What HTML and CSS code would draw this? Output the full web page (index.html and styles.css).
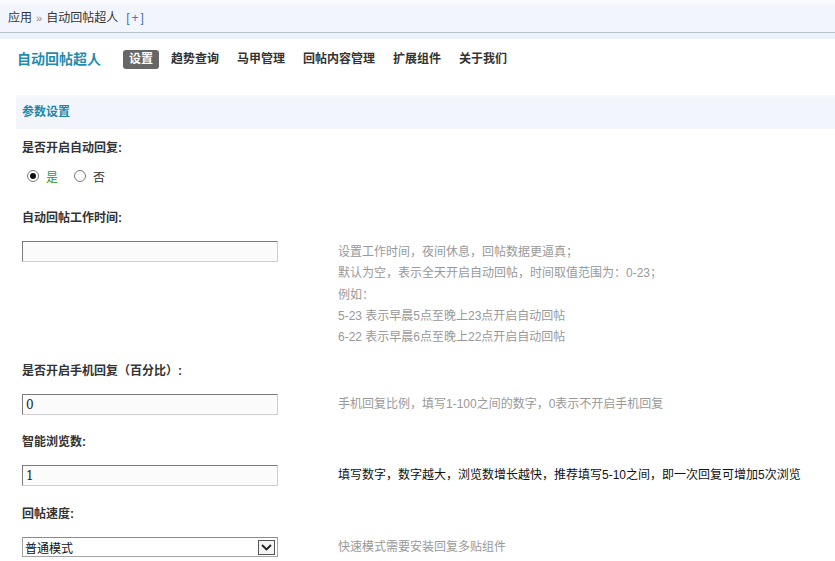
FILE: index.html
```html
<!DOCTYPE html>
<html lang="zh-CN">
<head>
<meta charset="utf-8">
<title>自动回帖超人</title>
<link rel="stylesheet" href="styles.css">
</head>
<body>
<div class="topbar">
  <span class="crumb">应用</span>
  <span class="sep">»</span>
  <span class="crumb">自动回帖超人</span>
  <a class="plus">[+]</a>
</div>
<div class="topstrip"></div>

<div class="main">
  <div class="titlerow">
    <h1 class="apptitle">自动回帖超人</h1>
    <nav class="nav">
      <a class="navitem active">设置</a>
      <a class="navitem">趋势查询</a>
      <a class="navitem">马甲管理</a>
      <a class="navitem">回帖内容管理</a>
      <a class="navitem">扩展组件</a>
      <a class="navitem">关于我们</a>
    </nav>
  </div>

  <div class="secthead">参数设置</div>

  <div class="form">
    <div class="field f1">
      <div class="label">是否开启自动回复:</div>
      <div class="radios">
        <label class="opt"><span class="radio checked"></span><span class="yes">是</span></label>
        <label class="opt"><span class="radio"></span><span class="no">否</span></label>
      </div>
    </div>

    <div class="field f2">
      <div class="label">自动回帖工作时间:</div>
      <div class="row">
        <input class="txt" type="text" value="">
        <div class="help multi">
          <div>设置工作时间，夜间休息，回帖数据更逼真；</div>
          <div>默认为空，表示全天开启自动回帖，时间取值范围为：0-23；</div>
          <div>例如：</div>
          <div>5-23 表示早晨5点至晚上23点开启自动回帖</div>
          <div>6-22 表示早晨6点至晚上22点开启自动回帖</div>
        </div>
      </div>
    </div>

    <div class="field f3">
      <div class="label">是否开启手机回复（百分比）:</div>
      <div class="row">
        <input class="txt" type="text" value="0">
        <div class="help">手机回复比例，填写1-100之间的数字，0表示不开启手机回复</div>
      </div>
    </div>

    <div class="field f4">
      <div class="label">智能浏览数:</div>
      <div class="row">
        <input class="txt" type="text" value="1">
        <div class="help dark">填写数字，数字越大，浏览数增长越快，推荐填写5-10之间，即一次回复可增加5次浏览</div>
      </div>
    </div>

    <div class="field f5">
      <div class="label">回帖速度:</div>
      <div class="row">
        <div class="selectbox">
          <select class="sel">
            <option>普通模式</option>
            <option>快速模式</option>
          </select>
          <span class="arrow"><svg width="11" height="7" viewBox="0 0 11 7"><path d="M1 1 L5.5 5.5 L10 1" fill="none" stroke="#222" stroke-width="1.8"/></svg></span>
        </div>
        <div class="help">快速模式需要安装回复多贴组件</div>
      </div>
    </div>
  </div>
</div>
</body>
</html>
```

FILE: styles.css
```css
* { box-sizing: border-box; }

html, body {
  margin: 0;
  padding: 0;
  background: #fff;
  font-family: "Liberation Sans", "Noto Sans CJK SC", sans-serif;
  font-size: 12px;
  color: #333;
}

.topbar {
  height: 33px;
  padding: 8px 0 0 8px;
  line-height: 20px;
  background: linear-gradient(#fbfcfe 0, #f2f6fc 6px, #f2f6fc 100%);
  border-bottom: 1px solid #b7c1cc;
  display: flex;
  align-items: flex-start;
  gap: 4px;
}
.crumb { color: #333; }
.sep { color: #888; font-size: 11px; }
.plus { color: #3b78b4; margin-left: 4px; letter-spacing: 2px; }

.topstrip {
  height: 6px;
  background: #edf3fb;
}

.main {
  padding-left: 16px;
}

.titlerow {
  display: flex;
  align-items: center;
  margin-top: 10px;
  height: 20px;
}
.apptitle {
  margin: 0 22px 0 1px;
  font-size: 14px;
  line-height: 20px;
  font-weight: bold;
  color: #1f8db0;
}
.nav {
  display: flex;
  align-items: center;
  gap: 6px;
}
.navitem {
  padding: 0 6px;
  height: 19px;
  line-height: 19px;
  font-weight: bold;
  color: #333;
  border-radius: 3px;
}
.navitem.active {
  background: #666;
  color: #fff;
}

.secthead {
  margin-top: 26px;
  height: 34px;
  line-height: 34px;
  padding-left: 6px;
  background: linear-gradient(#f7f9fd 0, #f2f6fc 4px, #f2f6fc 100%);
  color: #1f86a8;
  font-weight: bold;
}

.form {
  padding-left: 6px;
}

.field { margin-top: 17px; }
.field.f1 { margin-top: 9px; }
.field.f2 { margin-top: 22px; }
.field.f3 { margin-top: 13px; }
.field.f5 { margin-top: 18px; }

.label {
  height: 20px;
  line-height: 20px;
  font-weight: bold;
  color: #333;
}

.radios {
  margin-top: 8px;
  height: 20px;
  display: flex;
  align-items: center;
  padding-left: 5px;
  gap: 16px;
}
.opt {
  display: flex;
  align-items: center;
  gap: 7px;
}
.radio {
  width: 12px;
  height: 12px;
  border-radius: 50%;
  border: 1px solid #7a7a7a;
  background: #fff;
  display: flex;
  align-items: center;
  justify-content: center;
}
.radio.checked::after {
  content: "";
  width: 6px;
  height: 6px;
  border-radius: 50%;
  background: #111;
}
.yes { color: #2aa02a; }
.no { color: #333; }

.row {
  margin-top: 13px;
  display: flex;
  align-items: flex-start;
}

.txt {
  width: 256px;
  height: 21px;
  margin: 0;
  padding: 0 3px;
  font-family: "DejaVu Serif", "Liberation Serif", serif;
  font-size: 12px;
  color: #222;
  background: #fbfbfb;
  border: 1px solid #cfcfcf;
  border-top-color: #7c7c7c;
  border-left-color: #7c7c7c;
  outline: none;
}

.help {
  margin-left: 60px;
  line-height: 21px;
  color: #999;
}
.help.multi {
  line-height: 21.3px;
  padding-top: 1px;
}
.help.dark { color: #111; }

.selectbox {
  width: 256px;
  height: 20px;
  display: flex;
  align-items: center;
  border: 1px solid #a5a5a5;
  border-top-color: #8a8a8a;
  background: #fff;
}
.sel {
  flex: 1;
  height: 18px;
  border: none;
  outline: none;
  appearance: none;
  -webkit-appearance: none;
  background: transparent;
  padding: 0 0 0 2px;
  font-family: "Noto Sans CJK SC", sans-serif;
  font-size: 12px;
  color: #111;
}
.arrow {
  width: 17px;
  height: 15px;
  margin-right: 2px;
  border: 1px solid #555;
  background: #f4f4f4;
  display: flex;
  align-items: center;
  justify-content: center;
}
```
